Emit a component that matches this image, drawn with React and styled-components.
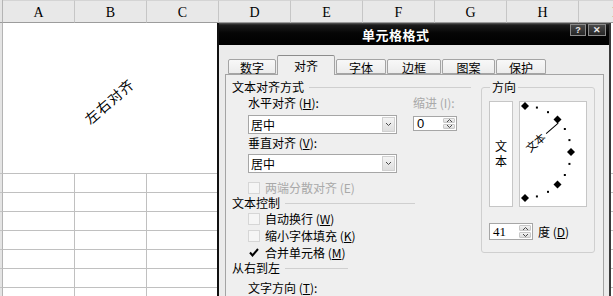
import React from 'react'
import styled, { createGlobalStyle } from 'styled-components'

const GlobalStyle = createGlobalStyle`
  html, body {
    margin: 0;
    padding: 0;
    background: #fff;
    overflow: hidden;
  }
  body {
    font-family: "Noto Sans CJK SC", "Liberation Sans", sans-serif;
    font-size: 12px;
    color: #000;
  }
`

const COLS = ['A', 'B', 'C', 'D', 'E', 'F', 'G', 'H', 'I']

const Screen = styled.div`
  position: relative;
  width: 613px;
  height: 296px;
  overflow: hidden;
  background: #fff;
`

/* ---------- spreadsheet ---------- */

const Sheet = styled.div`
  display: grid;
  grid-template-columns: 3px repeat(9, 72px);
  grid-template-rows: 23px 151px repeat(7, 19px);
`

const Corner = styled.div`
  background: #e4e4e4;
  border-right: 1px solid #b4b4b4;
  border-bottom: 1px solid #9c9c9c;
  box-sizing: border-box;
`

const ColHead = styled.div`
  display: flex;
  align-items: center;
  justify-content: center;
  background: #e8e8e8;
  border-top: 1px solid #d4d4d4;
  border-right: 1px solid #c6c6c6;
  border-bottom: 1px solid #9c9c9c;
  box-sizing: border-box;
  font-family: "Liberation Serif", "DejaVu Serif", serif;
  font-size: 14px;
  padding-top: 2px;
`

const RowHead = styled.div`
  background: #e4e4e4;
  border-right: 1px solid #b4b4b4;
  border-bottom: 1px solid #c4c4c4;
  box-sizing: border-box;
`

const MergedCell = styled.div`
  grid-column: 2 / span 3;
  display: flex;
  align-items: center;
  justify-content: center;
  border-bottom: 1px solid #c0c0c0;
  box-sizing: border-box;
`

const Cell = styled.div`
  border-right: 1px solid #c0c0c0;
  border-bottom: 1px solid #c0c0c0;
  box-sizing: border-box;
`

const RotatedText = styled.span`
  display: inline-block;
  transform: translate(-2px, 3px) rotate(-41deg);
  font-family: "Noto Sans CJK SC", sans-serif;
  font-size: 14px;
  letter-spacing: 1px;
`

/* ---------- dialog ---------- */

const Dialog = styled.div`
  position: absolute;
  left: 217px;
  top: 23px;
  width: 394px;
  height: 290px;
  background: #ebebeb;
  border-left: 2px solid #101010;
  border-right: 2px solid #3a3a3a;
  box-sizing: border-box;
`

const TitleBar = styled.div`
  display: flex;
  align-items: center;
  height: 22px;
  background: linear-gradient(#5a5a5a 0px, #1c1c1c 2px, #050505 10px, #000 100%);
  padding-right: 3px;
`

const Title = styled.div`
  padding-left: 143px;
  color: #fff;
  font-weight: bold;
  font-size: 13px;
  letter-spacing: 0.5px;
`

const TitleButtons = styled.div`
  display: flex;
  gap: 2px;
  margin-left: auto;
  margin-top: -8px;
`

const TitleButton = styled.div`
  width: ${p => p.$w}px;
  height: 10px;
  display: flex;
  align-items: center;
  justify-content: center;
  border: 1px solid #8a8a8a;
  background: linear-gradient(#4a4a4a, #262626);
  color: #e8e8e8;
  font-family: "Liberation Sans", sans-serif;
  font-size: 9px;
  font-weight: bold;
  line-height: 1;
`

const TabStrip = styled.div`
  display: flex;
  align-items: flex-end;
  gap: 1px;
  height: 19px;
  margin-top: 10px;
  padding-left: 9px;
  position: relative;
  z-index: 1;
`

const Tab = styled.div`
  width: ${p => p.$w}px;
  height: ${p => (p.$active ? 20 : 15)}px;
  display: flex;
  align-items: center;
  justify-content: center;
  box-sizing: border-box;
  border: 1px solid #a4a4a4;
  border-bottom: ${p => (p.$active ? 'none' : '1px solid #a4a4a4')};
  border-top-color: ${p => (p.$active ? '#8c8c8c' : '#a4a4a4')};
  border-radius: 2px 2px 0 0;
  background: ${p => (p.$active ? '#efefef' : 'linear-gradient(#f8f8f8, #ececec)')};
  font-size: 12px;
  margin-bottom: ${p => (p.$active ? -1 : 0)}px;
  padding-top: ${p => (p.$active ? 0 : 1)}px;
`

const Panel = styled.div`
  margin-left: 6px;
  width: 379px;
  height: 240px;
  box-sizing: border-box;
  border: 1px solid #a4a4a4;
  background: #efefef;
  padding: 5px 0 0 6px;
  display: grid;
  grid-template-columns: 249px 114px;
  align-items: start;
`

const LeftCol = styled.div`
  display: flex;
  flex-direction: column;
`

const SectionHead = styled.div`
  display: flex;
  align-items: center;
  gap: 5px;
  height: 14px;
  line-height: 14px;
  margin-top: ${p => p.$mt || 0}px;
  &::after {
    content: '';
    width: ${p => p.$line}px;
    height: 1px;
    background: #cfcfcf;
  }
`

const FieldGrid = styled.div`
  display: grid;
  grid-template-columns: 165px 60px;
  padding-left: 16px;
  margin-top: 2px;
`

const Label = styled.div`
  height: 14px;
  line-height: 14px;
  color: ${p => (p.$disabled ? '#a9a9a9' : '#000')};
  margin-top: ${p => p.$mt || 0}px;
  padding-left: ${p => p.$pl || 0}px;
  white-space: nowrap;
`

const Select = styled.div`
  display: flex;
  width: 149px;
  height: 19px;
  box-sizing: border-box;
  border: 1px solid #a6a6a6;
  background: #fff;
  margin-top: ${p => p.$mt || 0}px;
`

const SelectValue = styled.div`
  flex: 1;
  padding-left: 2px;
  line-height: 17px;
`

const DropButton = styled.div`
  width: 13px;
  margin: 1px;
  display: flex;
  align-items: center;
  justify-content: center;
  background: linear-gradient(#f4f4f4, #dedede);
  border: 1px solid #d0d0d0;
  box-sizing: border-box;
`

const Spin = styled.div`
  display: flex;
  width: ${p => p.$w}px;
  height: ${p => p.$h}px;
  box-sizing: border-box;
  border: 1px solid #a6a6a6;
  background: #fff;
  margin-top: ${p => p.$mt || 0}px;
`

const SpinValue = styled.div`
  flex: 1;
  padding-left: 3px;
  line-height: ${p => p.$h - 2}px;
  font-family: ${p => (p.$serif ? '"Liberation Serif", serif' : '"Liberation Sans", sans-serif')};
  font-size: 13px;
`

const SpinButtons = styled.div`
  display: flex;
  flex-direction: column;
  width: 12px;
  margin: 1px;
  gap: 1px;
`

const SpinButton = styled.div`
  flex: 1;
  display: flex;
  align-items: center;
  justify-content: center;
  background: linear-gradient(#f2f2f2, #dcdcdc);
  border: 1px solid #c8c8c8;
  border-radius: 1px;
`

const CheckRow = styled.div`
  display: flex;
  align-items: center;
  gap: 5px;
  height: 17px;
  padding-left: 16px;
  margin-top: ${p => p.$mt || 0}px;
  color: ${p => (p.$disabled ? '#a9a9a9' : '#000')};
`

const Box = styled.div`
  width: 12px;
  height: 12px;
  box-sizing: border-box;
  border: 1px solid ${p => (p.$checked ? 'transparent' : '#d6d6d6')};
  background: ${p => (p.$checked ? 'transparent' : '#f5f5f5')};
  display: flex;
  align-items: center;
  justify-content: center;
`

const Group = styled.fieldset`
  margin: 0;
  padding: 7px 7px 11px 7px;
  border: 1px solid #cfcfcf;
  border-radius: 3px;
  min-width: 0;
  height: 173px;
  box-sizing: border-box;
`

const Legend = styled.legend`
  padding: 0 2px;
  margin-left: 1px;
  line-height: 14px;
  height: 14px;
`

const OrientRow = styled.div`
  display: flex;
  gap: 6px;
`

const VerticalBox = styled.div`
  width: 24px;
  height: 106px;
  box-sizing: border-box;
  background: #fff;
  border: 1px solid #c6c6c6;
  display: flex;
  flex-direction: column;
  align-items: center;
  justify-content: center;
  line-height: 15px;
  padding-bottom: 2px;
`

const DialBox = styled.div`
  width: 68px;
  height: 106px;
  box-sizing: border-box;
  background: #fff;
  border: 1px solid #c6c6c6;
`

const DegreeRow = styled.div`
  display: flex;
  align-items: center;
  gap: 5px;
  margin-top: 16px;
`

const U = styled.span`
  text-decoration: underline;
  text-underline-offset: 1px;
`

const Acc = ({ k }) => (
  <>
    (<U>{k}</U>)
  </>
)

const Chevron = ({ up }) => (
  <svg width="5" height="3" viewBox="0 0 5 3">
    <path d={up ? 'M0 3 L2.5 0.5 L5 3' : 'M0 0 L2.5 2.5 L5 0'} fill="none" stroke="#4a4a4a" strokeWidth="1" />
  </svg>
)

const Check = () => (
  <svg width="10" height="9" viewBox="0 0 10 9">
    <path d="M1 4.5 L3.5 7.5 L9 1" fill="none" stroke="#000" strokeWidth="2" />
  </svg>
)

const SpinBox = ({ value, w, h, mt, serif }) => (
  <Spin $w={w} $h={h} $mt={mt}>
    <SpinValue $h={h} $serif={serif}>{value}</SpinValue>
    <SpinButtons>
      <SpinButton>
        <Chevron up />
      </SpinButton>
      <SpinButton>
        <Chevron />
      </SpinButton>
    </SpinButtons>
  </Spin>
)

const Dial = () => {
  const cx = 5
  const cy = 50
  const r = 46
  const marks = []
  for (let a = 90; a >= -90; a -= 15) {
    const rad = (a * Math.PI) / 180
    const x = cx + r * Math.cos(rad)
    const y = cy - r * Math.sin(rad)
    if (a % 45 === 0) {
      marks.push(<path key={a} d={`M${x} ${y - 4} L${x + 4} ${y} L${x} ${y + 4} L${x - 4} ${y} Z`} fill="#000" />)
    } else {
      marks.push(<rect key={a} x={x - 1} y={y - 1} width="2" height="2" fill="#000" />)
    }
  }
  return (
    <svg width="66" height="104" viewBox="0 0 66 104">
      {marks}
      <g transform={`rotate(-41 ${cx} ${cy})`}>
        <text x={cx + 3} y={cy + 4} fontSize="11" fontFamily="Noto Sans CJK SC, sans-serif">
          文本
        </text>
        <line x1={cx + 28} y1={cy} x2={cx + 44} y2={cy} stroke="#000" strokeWidth="1" />
      </g>
    </svg>
  )
}

const TABS = [
  { label: '数字', w: 48 },
  { label: '对齐', w: 58, active: true },
  { label: '字体', w: 50 },
  { label: '边框', w: 54 },
  { label: '图案', w: 53 },
  { label: '保护', w: 50 },
]

const App = () => (
  <Screen>
    <GlobalStyle />
    <Sheet>
      <Corner />
      {COLS.map(c => (
        <ColHead key={c}>{c}</ColHead>
      ))}
      <RowHead />
      <MergedCell>
        <RotatedText>左右对齐</RotatedText>
      </MergedCell>
      {COLS.slice(3).map(c => (
        <Cell key={c} />
      ))}
      {Array.from({ length: 7 }).map((_, r) => (
        <React.Fragment key={r}>
          <RowHead />
          {COLS.map(c => (
            <Cell key={c} />
          ))}
        </React.Fragment>
      ))}
    </Sheet>

    <Dialog>
      <TitleBar>
        <Title>单元格格式</Title>
        <TitleButtons>
          <TitleButton $w={14}>?</TitleButton>
          <TitleButton $w={16}>✕</TitleButton>
        </TitleButtons>
      </TitleBar>

      <TabStrip>
        {TABS.map(t => (
          <Tab key={t.label} $w={t.w} $active={t.active}>
            {t.label}
          </Tab>
        ))}
      </TabStrip>

      <Panel>
        <LeftCol>
          <SectionHead $line={162}>文本对齐方式</SectionHead>
          <FieldGrid>
            <Label>
              水平对齐 <Acc k="H" />:
            </Label>
            <Label $disabled>
              缩进 (I):
            </Label>
            <Select $mt={5}>
              <SelectValue>居中</SelectValue>
              <DropButton>
                <Chevron />
              </DropButton>
            </Select>
            <SpinBox value="0" w={44} h={15} mt={6} />
            <Label $mt={2}>
              垂直对齐 <Acc k="V" />:
            </Label>
            <div />
            <Select $mt={4}>
              <SelectValue>居中</SelectValue>
              <DropButton>
                <Chevron />
              </DropButton>
            </Select>
          </FieldGrid>
          <CheckRow $mt={6} $disabled>
            <Box />
            两端分散对齐 (E)
          </CheckRow>
          <SectionHead $line={130}>文本控制</SectionHead>
          <CheckRow>
            <Box />
            <span>
              自动换行 <Acc k="W" />
            </span>
          </CheckRow>
          <CheckRow>
            <Box />
            <span>
              缩小字体填充 <Acc k="K" />
            </span>
          </CheckRow>
          <CheckRow>
            <Box $checked>
              <Check />
            </Box>
            <span>
              合并单元格 <Acc k="M" />
            </span>
          </CheckRow>
          <SectionHead $line={63}>从右到左</SectionHead>
          <Label $mt={6} $pl={16}>
            文字方向 <Acc k="T" />:
          </Label>
        </LeftCol>

        <Group>
          <Legend>方向</Legend>
          <OrientRow>
            <VerticalBox>
              <span>文</span>
              <span>本</span>
            </VerticalBox>
            <DialBox>
              <Dial />
            </DialBox>
          </OrientRow>
          <DegreeRow>
            <SpinBox value="41" w={44} h={17} serif />
            <span>
              度 <Acc k="D" />
            </span>
          </DegreeRow>
        </Group>
      </Panel>
    </Dialog>
  </Screen>
)

export default App
